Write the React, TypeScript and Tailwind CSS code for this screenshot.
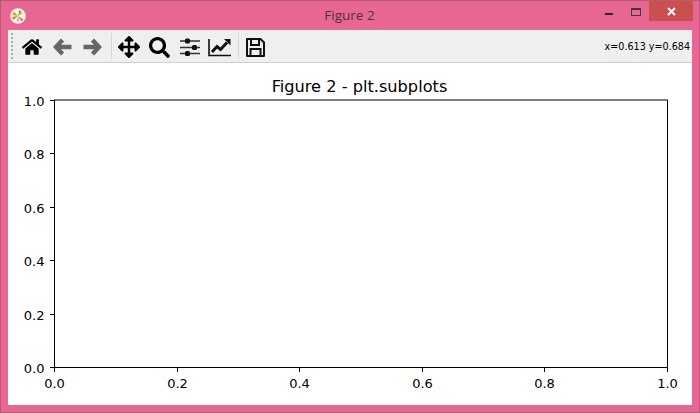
import React from "react";
import { FaHome, FaArrowsAlt, FaSearch } from "react-icons/fa";

const ticks = [0, 0.2, 0.4, 0.6, 0.8, 1.0];
const L = 54.5, R = 667.5, T = 100, B = 367.5;

function Logo() {
  return (
    <svg width="16" height="16" viewBox="0 0 16 16">
      <circle cx="8" cy="8" r="7.8" fill="#f6f6f0" />
      <path d="M8 8 L4 3.5 L2 7 Z" fill="#e8a020" />
      <path d="M8 8 L2 9 L3.5 12 Z" fill="#e97c25" />
      <path d="M8 8 L9.5 2 L11.5 3.5 Z" fill="#5fa03f" />
      <path d="M8 8 L13.5 11.5 L11.5 13.5 Z" fill="#e56f2a" />
      <path d="M8 8 L13 6 L11.5 4 Z" fill="#d6cf4a" />
      <path d="M6.5 13 L8 8 L9.5 13.5 Z" fill="#b9b9a0" />
    </svg>
  );
}

function Sep() {
  return <div className="w-px h-[26px] bg-[#d8d8d8] -mt-[2px]" />;
}

function ArrowLeft() {
  return (
    <svg width="19" height="18" viewBox="0 0 19 18" className="block">
      <path d="M9.5 2 L3 9 L9.5 16 M4 9 H18.5" fill="none" stroke="#666" strokeWidth="4.4" />
    </svg>
  );
}

function ArrowRight() {
  return (
    <svg width="19" height="18" viewBox="0 0 19 18" className="block">
      <path d="M9.5 2 L16 9 L9.5 16 M15 9 H0.5" fill="none" stroke="#666" strokeWidth="4.4" />
    </svg>
  );
}

function Sliders() {
  return (
    <svg width="20" height="18" viewBox="0 0 20 18" className="block">
      <path d="M0 3 H20 M0 9.5 H20 M0 15.5 H20" stroke="#333" strokeWidth="1.4" />
      <rect x="5" y="0.5" width="5" height="5" rx="1.5" fill="#111" />
      <rect x="12" y="7" width="5" height="5" rx="1.5" fill="#111" />
      <rect x="5" y="13" width="5" height="5" rx="1.5" fill="#111" />
    </svg>
  );
}

function ChartIcon() {
  return (
    <svg width="23" height="19" viewBox="0 0 23 19" className="block">
      <path d="M1 1 V17.5 H23" fill="none" stroke="#111" strokeWidth="1.6" />
      <path d="M4 14 L9 8.5 L12.5 11.5 L19 4.5" fill="none" stroke="#111" strokeWidth="3" />
      <path d="M16 1 H22.5 V7.5 Z" fill="#111" />
    </svg>
  );
}

function SaveIcon() {
  return (
    <svg width="19" height="19" viewBox="0 0 19 19" className="block">
      <path d="M1 1 H14.5 L18 4.5 V18 H1 Z" fill="none" stroke="#111" strokeWidth="2" strokeLinejoin="round" />
      <path d="M5 1 V7 H13 V1" fill="none" stroke="#111" strokeWidth="2" />
      <rect x="4.5" y="11" width="10" height="7" fill="none" stroke="#111" strokeWidth="2" />
    </svg>
  );
}

function Chart() {
  return (
    <svg width="684" height="342" viewBox="8 63 684 342" className="block" style={{ fontFamily: '"DejaVu Sans", sans-serif' }}>
      <text x="359.5" y="92" fontSize="16.2" textAnchor="middle" fill="#000">Figure 2 - plt.subplots</text>
      <rect x={L} y={T} width={R - L} height={B - T} fill="#fff" stroke="#000" strokeWidth="1" />
      {ticks.map((t, i) => {
        const x = Math.round(L + (R - L) * (i / 5) - 0.5) + 0.5;
        return (
          <g key={i}>
            <line x1={x} x2={x} y1={B} y2={B + 4.5} stroke="#000" />
            <text x={x} y={388} fontSize="13" textAnchor="middle" fill="#000">{t.toFixed(1)}</text>
          </g>
        );
      })}
      {ticks.map((t, i) => {
        const y = Math.round(B - (B - T) * (i / 5) - 0.5) + 0.5;
        return (
          <g key={i}>
            <line x1={L - 4.5} x2={L} y1={y} y2={y} stroke="#000" />
            <text x={44.5} y={y + 5} fontSize="13" textAnchor="end" fill="#000">{t.toFixed(1)}</text>
          </g>
        );
      })}
    </svg>
  );
}

export default function App() {
  return (
    <div className="w-[700px] h-[413px] bg-[#e76792] flex flex-col border border-[#b85a7c] overflow-hidden">
      <div className="h-[29px] flex items-center shrink-0 pl-[9px]">
        <Logo />
        <div className="flex-1 text-center text-[13.5px] text-[#54303c] pl-[78px] pb-[1px]" style={{ fontFamily: '"Open Sans", sans-serif' }}>Figure 2</div>
        <div className="flex items-start self-start mr-[6px]">
          <div className="w-[27px] h-[20px] flex items-center justify-center pt-[6px]">
            <div className="w-[8px] h-[2px] bg-[#2a2a2a]" />
          </div>
          <div className="w-[27px] h-[20px] flex items-center justify-center">
            <div className="w-[10px] h-[8px] border border-[#3a3a3a] border-t-2 mt-[1px]" />
          </div>
          <div className="w-[44px] h-[20px] bg-[#c9504f] flex items-center justify-center text-white">
            <svg width="9" height="9" viewBox="0 0 9 9"><path d="M1 1 L8 8 M8 1 L1 8" stroke="#fff" strokeWidth="2" /></svg>
          </div>
        </div>
      </div>
      <div className="w-[684px] h-[375px] ml-[7px] flex flex-col bg-white">
        <div className="h-[33px] bg-[#efefef] border-b border-[#d0d0d0] flex items-center pt-[2px] shrink-0">
          <div className="w-[3px] h-[26px] ml-[3px] mr-[8px] -mt-[2px] border-l-2 border-dotted border-[#b0b0b0]" />
          <FaHome className="text-[20px] text-black" />
          <div className="w-[11px]" />
          <ArrowLeft />
          <div className="w-[11px]" />
          <ArrowRight />
          <div className="w-[9px]" />
          <Sep />
          <div className="w-[6px]" />
          <FaArrowsAlt className="text-[22px] text-black" />
          <div className="w-[9px]" />
          <FaSearch className="text-[21px] text-black" />
          <div className="w-[10px]" />
          <Sliders />
          <div className="w-[8px]" />
          <ChartIcon />
          <div className="w-[7px]" />
          <Sep />
          <div className="w-[7px]" />
          <SaveIcon />
          <div className="flex-1" />
          <span className="text-[9.6px] text-black mr-[2px]" style={{ fontFamily: '"DejaVu Sans", sans-serif' }}>x=0.613 y=0.684</span>
        </div>
        <Chart />
      </div>
    </div>
  );
}
